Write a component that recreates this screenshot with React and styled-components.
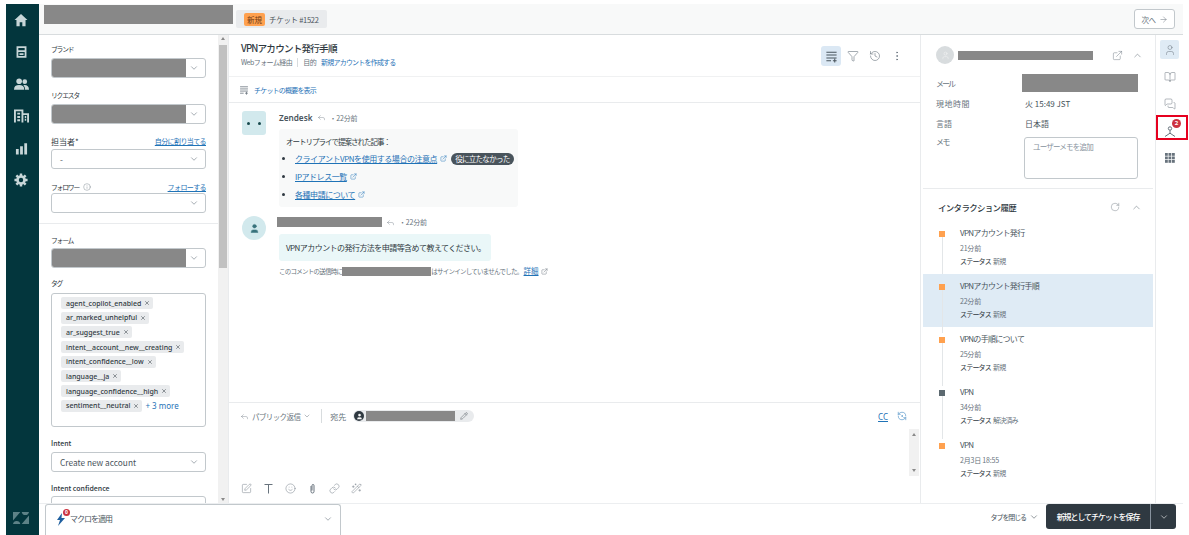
import React from 'react';
import styled, { createGlobalStyle } from 'styled-components';
import {
  ChevronDown, ChevronUp, ExternalLink, Filter, History, MoreVertical, Reply, RotateCw, RefreshCcwDot,
  User, BookOpen, MessagesSquare, Smile, Link, WandSparkles, SquarePen, Pencil,
  ArrowRight, Info, X,
} from 'lucide-react';

const Global = createGlobalStyle`
  html, body { margin: 0; padding: 0; background: #fff; }
  body { font-family: "Noto Sans CJK JP", "Noto Sans", sans-serif; color: #2f3941; overflow: hidden; }
  * { box-sizing: border-box; }
`;

const Page = styled.div`
  width: 1189px;
  height: 535px;
  padding: 4px 6px 0;
  display: flex;
  position: relative;
  overflow: hidden;
  white-space: nowrap;
`;

const Nav = styled.nav`
  width: 33px;
  flex: none;
  background: #03363d;
  display: flex;
  flex-direction: column;
  align-items: center;
  padding: 9px 3px 0 0;
  gap: 18px;
  color: #c8d6d8;
  & > svg { display: block; }
  & > svg:last-child { margin-top: auto; margin-bottom: 11px; color: #5d8287; }
`;

const Main = styled.div`
  flex: 1;
  min-width: 0;
  display: flex;
  flex-direction: column;
`;

const Header = styled.header`
  height: 31px;
  flex: none;
  background: #f8f9f9;
  border-bottom: 1px solid #d8dcde;
  display: flex;
  align-items: center;
  padding-left: 5px;
  padding-right: 8px;
`;

const Redact = styled.div`
  width: ${(p) => p.w}px;
  height: ${(p) => p.h}px;
  background: #888;
  flex: none;
`;

const TabRedact = styled(Redact)`
  align-self: flex-start;
  margin-top: 1px;
`;

const TicketTab = styled.div`
  margin-left: 3px;
  height: 18px;
  width: 91px;
  background: #e9ebed;
  border-radius: 2px;
  display: flex;
  align-items: center;
  padding-left: 8px;
  gap: 4px;
  font-size: 7.5px;
  letter-spacing: -0.3px;
  color: #49545c;
`;

const NewBadge = styled.span`
  background: #ffa14f;
  color: #703b15;
  border-radius: 2px;
  font-size: 7.5px;
  letter-spacing: 0;
  line-height: 13px;
  height: 13px;
  width: 21px;
  text-align: center;
`;

const NextButton = styled.button`
  margin-left: auto;
  width: 41px;
  height: 20px;
  border: 1px solid #c2c8cc;
  border-radius: 3px;
  background: #fff;
  color: #68737d;
  font: inherit;
  font-size: 7.5px;
  letter-spacing: -0.5px;
  display: flex;
  align-items: center;
  justify-content: center;
  gap: 3px;
  padding: 0;
`;

const Body = styled.div`
  flex: 1;
  min-height: 0;
  display: flex;
`;

const Sidebar = styled.aside`
  width: 190px;
  flex: none;
  display: flex;
  border-right: 1px solid #e9ebed;
  overflow: hidden;
`;

const SideContent = styled.div`
  flex: 1;
  min-width: 0;
  overflow: hidden;
`;

const SideSection = styled.div`
  padding: ${(p) => p.pad};
  border-bottom: ${(p) => (p.divider ? '1px solid #e9ebed' : 'none')};
`;

const Field = styled.div`
  margin-bottom: ${(p) => p.mb ?? 10}px;
`;

const LabelRow = styled.div`
  display: flex;
  align-items: center;
  justify-content: space-between;
  height: 16px;
  font-size: ${(p) => (p.kanji ? 8 : p.bold ? 7 : 6.8)}px;
  letter-spacing: ${(p) => (p.kanji || p.bold ? 0 : -1.2)}px;
  color: #2f3941;
  font-weight: ${(p) => (p.bold ? 500 : 400)};
  margin-bottom: ${(p) => p.mb ?? 1}px;
`;

const LabelText = styled.span`
  display: flex;
  align-items: center;
  gap: 4px;
`;

const SideLink = styled.a`
  color: #1f73b7;
  text-decoration: underline;
  font-size: 7px;
  letter-spacing: -0.6px;
`;

const Select = styled.div`
  height: 20px;
  border: 1px solid #c2c8cc;
  border-radius: 3px;
  display: flex;
  align-items: center;
  font-size: 8.3px;
  color: #49545c;
  padding-left: ${(p) => (p.flush ? 0 : 8)}px;
  padding-right: 6px;
  background: #fff;
  overflow: hidden;
  & > svg { margin-left: auto; color: #68737d; }
`;

const TagBox = styled.div`
  height: 134px;
  border: 1px solid #c2c8cc;
  border-radius: 3px;
  padding: 3px 9px;
  display: flex;
  flex-direction: column;
  align-items: flex-start;
  gap: 2.7px;
`;

const TagLine = styled.div`
  display: flex;
  align-items: center;
  gap: 3px;
`;

const Tag = styled.span`
  height: 12px;
  background: #e9ebed;
  border-radius: 2px;
  font-family: "Noto Sans", sans-serif;
  font-size: 7px;
  font-weight: 500;
  color: #2f3941;
  display: flex;
  align-items: center;
  gap: 3px;
  padding: 0 3px 0 5px;
`;

const More = styled.span`
  font-family: "Noto Sans", sans-serif;
  font-size: 8px;
  color: #1f73b7;
`;

const Scrollbar = styled.div`
  width: 10px;
  flex: none;
  background: #f1f1f1;
  display: flex;
  flex-direction: column;
  align-items: center;
  justify-content: space-between;
  padding-top: 2px;
  padding-bottom: 2px;
`;

const ScrollThumb = styled.div`
  width: 8px;
  height: 223px;
  margin-top: 5px;
  margin-bottom: auto;
  background: #c1c1c1;
`;

const Arrow = styled.span`
  width: 0;
  height: 0;
  border-left: 2.5px solid transparent;
  border-right: 2.5px solid transparent;
  border-${(p) => (p.down ? 'top' : 'bottom')}: 3px solid #8a8a8a;
`;

const Center = styled.main`
  flex: 1;
  min-width: 0;
  display: flex;
  flex-direction: column;
  border-right: 1px solid #e9ebed;
`;

const TitleBar = styled.div`
  height: 42px;
  flex: none;
  border-bottom: 1px solid #f0f1f2;
  padding: 6px 13px 0 12px;
  display: flex;
  justify-content: space-between;
`;

const Title = styled.h1`
  margin: 0;
  font-size: 9.6px;
  letter-spacing: -0.8px;
  line-height: 15px;
  font-weight: 500;
  color: #2f3941;
`;

const SubLine = styled.div`
  display: flex;
  align-items: center;
  gap: 5px;
  font-size: 7px;
  letter-spacing: -0.55px;
  line-height: 12px;
  color: #68737d;
`;

const Sep = styled.span`
  width: 1px;
  height: 9px;
  background: #d8dcde;
`;

const BlueText = styled.span`
  color: #1f73b7;
  letter-spacing: -0.8px;
`;

const ToolIcons = styled.div`
  display: flex;
  align-items: center;
  gap: 2px;
  height: 20px;
  margin-top: 5px;
  color: #68737d;
`;

const ToolIcon = styled.span`
  width: 20px;
  height: 20px;
  border-radius: 3px;
  display: flex;
  align-items: center;
  justify-content: center;
  background: ${(p) => (p.active ? '#dbe8f4' : 'transparent')};
  color: ${(p) => (p.active ? '#49545c' : '#68737d')};
`;

const SummaryRow = styled.div`
  height: 26px;
  flex: none;
  border-bottom: 1px solid #e9ebed;
  display: flex;
  align-items: center;
  gap: 5px;
  padding-left: 10px;
  color: #68737d;
  font-size: 7px;
`;

const Conversation = styled.div`
  flex: 1;
  min-height: 0;
  padding: 8px 0 0 13px;
  display: flex;
  flex-direction: column;
  gap: 9px;
`;

const Msg = styled.div`
  display: flex;
  gap: ${(p) => p.gap}px;
`;

const Avatar = styled.div`
  width: 24px;
  height: 24px;
  flex: none;
  background: #d2e9ed;
  border-radius: ${(p) => (p.round ? '50%' : '3px')};
  display: flex;
  align-items: center;
  justify-content: center;
  gap: 8px;
  color: #38727c;
`;

const Eye = styled.i`
  width: 3px;
  height: 3px;
  border-radius: 50%;
  background: #17494d;
`;

const MsgBody = styled.div`
  display: flex;
  flex-direction: column;
  align-items: flex-start;
`;

const MsgHead = styled.div`
  display: flex;
  align-items: center;
  gap: 4px;
  height: ${(p) => p.h}px;
  font-size: 7px;
  letter-spacing: -0.2px;
  color: #68737d;
`;

const Author = styled.b`
  font-family: "Noto Sans", sans-serif;
  font-size: 8.2px;
  letter-spacing: 0;
  font-weight: 600;
  color: #49545c;
`;

const ArticleBox = styled.div`
  width: 239px;
  height: 78px;
  margin-top: 5px;
  background: #f8f9f9;
  border-radius: 3px;
  padding: 6px 7px;
  font-size: 8px;
  line-height: 13px;
`;

const ArticleIntro = styled.div`
  font-size: 7.5px;
  letter-spacing: -1px;
`;

const ArticleList = styled.ul`
  list-style: disc;
  margin: 4px 0 0;
  padding: 0 0 0 9px;
  display: flex;
  flex-direction: column;
  gap: 5px;
`;

const ArticleItem = styled.li`
  padding: 0;
`;

const ArticleRow = styled.span`
  display: inline-flex;
  align-items: center;
  gap: 3px;
  color: #1f73b7;
  & a { color: #1f73b7; text-decoration: underline; letter-spacing: -0.45px; }
`;

const Pill = styled.span`
  background: #49545c;
  color: #fff;
  font-size: 7.5px;
  letter-spacing: -0.7px;
  line-height: 12px;
  padding: 0 4px;
  border-radius: 6px;
  margin-left: 1px;
`;

const Bubble = styled.div`
  width: 212px;
  height: 27px;
  margin-top: 6px;
  margin-left: 2px;
  background: #eaf7f8;
  border-radius: 3px;
  font-size: 8px;
  letter-spacing: -0.55px;
  line-height: 27px;
  padding-left: 7px;
  color: #2f3941;
`;

const Note = styled.div`
  margin-top: 5px;
  margin-left: 2px;
  display: flex;
  align-items: center;
  font-size: 6.5px;
  letter-spacing: -0.75px;
  line-height: 10px;
  color: #68737d;
`;

const NoteLink = styled.u`
  color: #1f73b7;
  font-size: 7.5px;
  letter-spacing: 0;
  margin: 0 2px 0 1px;
`;

const Composer = styled.section`
  height: 101px;
  flex: none;
  border-top: 1px solid #e9ebed;
  display: flex;
  flex-direction: column;
`;

const ComposerTop = styled.div`
  height: 26px;
  flex: none;
  display: flex;
  align-items: center;
  padding: 0 13px 0 11px;
  color: #68737d;
  gap: 3px;
`;

const ReplyLabel = styled.span`
  font-size: 7.5px;
  letter-spacing: -0.6px;
`;

const ToLabel = styled.span`
  font-size: 8px;
`;

const ReplySep = styled(Sep)`
  height: 14px;
  margin: 0 5px 0 7px;
`;

const Recipient = styled.span`
  height: 12px;
  margin-left: 4px;
  background: #e9ebed;
  border-radius: 6px;
  display: flex;
  align-items: center;
  padding: 0 6px 0 1px;
  gap: 1px;
  color: #2f3941;
`;

const RecipientDot = styled.span`
  width: 10px;
  height: 10px;
  background: #2f3941;
  border-radius: 50%;
  margin-right: 1px;
  color: #fff;
  display: flex;
  align-items: center;
  justify-content: center;
`;

const RedactSmall = styled(Redact)`
  margin-right: 4px;
`;

const CcRow = styled.span`
  margin-left: auto;
  display: flex;
  align-items: center;
  gap: 9px;
  color: #1f73b7;
  & u { font-family: "Noto Sans", sans-serif; font-size: 8px; }
`;

const ComposerMid = styled.div`
  flex: 1;
  display: flex;
  justify-content: flex-end;
  padding-right: 1px;
`;

const ComposerScroll = styled(Scrollbar)`
  height: 47px;
  padding-top: 4px;
  padding-bottom: 4px;
`;

const ComposerTools = styled.div`
  height: 27px;
  flex: none;
  display: flex;
  align-items: center;
  gap: 11px;
  padding-left: 12px;
  padding-bottom: 3px;
  color: #68737d;
`;

const Details = styled.aside`
  width: 235px;
  flex: none;
  display: flex;
  flex-direction: column;
  border-right: 1px solid #e9ebed;
  padding: 0 2px;
`;

const UserHead = styled.div`
  height: 38px;
  flex: none;
  display: flex;
  align-items: center;
  padding: 2px 10px 0 13px;
  gap: 4px;
  color: #68737d;
`;

const UserCircle = styled.span`
  width: 18px;
  height: 18px;
  background: #d8dcde;
  border-radius: 50%;
  display: flex;
  align-items: center;
  justify-content: center;
  color: #f8f9f9;
`;

const HeadIcons = styled.span`
  margin-left: auto;
  display: flex;
  align-items: center;
  gap: 9px;
`;

const InfoGrid = styled.div`
  display: grid;
  grid-template-columns: 86px 1fr;
  grid-template-rows: 20px 20px 20px 55px;
  padding: 0 15px 0 13px;
  font-size: 8px;
  align-items: center;
  color: #68737d;
`;

const InfoLabel = styled.div`
  letter-spacing: ${(p) => p.ls || 0}px;
`;

const InfoValue = styled.div`
  color: #49545c;
  padding-left: 3px;
`;

const MemoLabel = styled.div`
  align-self: start;
  margin-top: 3px;
  letter-spacing: -1.5px;
`;

const MemoBox = styled.div`
  align-self: start;
  height: 42px;
  margin-top: 4px;
  margin-left: 2px;
  border: 1px solid #c2c8cc;
  border-radius: 3px;
  padding: 3px 8px;
  font-size: 7.5px;
  letter-spacing: -0.8px;
  color: #87929d;
`;

const HistoryHead = styled.div`
  height: 33px;
  flex: none;
  border-top: 1px solid #e9ebed;
  display: flex;
  align-items: center;
  padding: 4px 11px 0 15px;
  font-size: 8.5px;
  letter-spacing: -0.7px;
  font-weight: 500;
  color: #2f3941;
  & > span { margin-left: auto; display: flex; gap: 11px; color: #68737d; align-items: center; }
`;

const Timeline = styled.div`
  display: flex;
  flex-direction: column;
`;

const Item = styled.div`
  height: 53px;
  display: flex;
  padding: 5px 0 0 16px;
  position: relative;
  background: ${(p) => (p.selected ? '#dfebf5' : 'transparent')};
  &::before {
    content: '';
    position: absolute;
    left: 18.5px;
    top: 12px;
    bottom: -6px;
    width: 1px;
    background: #e3e6e8;
    display: ${(p) => (p.last ? 'none' : 'block')};
    z-index: 0;
  }
`;

const Dot = styled.span`
  position: relative;
  z-index: 1;
  width: 6px;
  height: 6px;
  margin-top: 5px;
  flex: none;
  background: ${(p) => p.color};
`;

const ItemText = styled.div`
  margin-left: 15px;
  display: flex;
  flex-direction: column;
`;

const ItemTitle = styled.div`
  font-size: 8px;
  letter-spacing: -0.7px;
  line-height: 14px;
  color: #49545c;
`;

const ItemTime = styled.div`
  font-size: 7px;
  letter-spacing: -0.2px;
  line-height: 13px;
  margin-top: 2px;
  color: #68737d;
`;

const ItemStatus = styled.div`
  font-size: 7px;
  letter-spacing: -0.8px;
  line-height: 13px;
  color: #2f3941;
  & > span { color: #68737d; margin-left: 2px; }
`;

const Rail = styled.div`
  width: 27px;
  flex: none;
  display: flex;
  flex-direction: column;
  align-items: center;
  padding-top: 5px;
  gap: 8px;
`;

const RailIcon = styled.span`
  width: 19px;
  height: 19px;
  border-radius: 2px;
  display: flex;
  align-items: center;
  justify-content: center;
  background: ${(p) => (p.active ? '#dfebf5' : 'transparent')};
  color: #68737d;
  position: relative;
`;

const RedBadge = styled.span`
  position: absolute;
  top: -2px;
  right: -2px;
  width: 9px;
  height: 9px;
  border-radius: 50%;
  background: #cc3340;
  color: #fff;
  font-family: "Noto Sans", sans-serif;
  font-size: 6px;
  font-weight: 700;
  line-height: 9px;
  text-align: center;
`;

const Highlight = styled.div`
  position: absolute;
  left: 1156px;
  top: 115px;
  width: 32px;
  height: 25px;
  border: 2px solid #e6001f;
`;

const Footer = styled.footer`
  height: 32px;
  flex: none;
  border-top: 1px solid #eceef0;
  display: flex;
  align-items: flex-start;
  padding-left: 6px;
  padding-right: 7px;
`;

const MacroBox = styled.div`
  width: 296px;
  height: 31px;
  border: 1px solid #c2c8cc;
  border-bottom: none;
  border-radius: 3px 3px 0 0;
  display: flex;
  align-items: center;
  padding: 0 7px 3px 9px;
  font-size: 8px;
  letter-spacing: -1px;
  color: #49545c;
  & > svg:last-child { margin-left: auto; color: #68737d; }
`;

const MacroIcon = styled.span`
  position: relative;
  width: 14px;
  height: 14px;
  margin-right: 1px;
  color: #1f5f9f;
`;

const MacroCount = styled.span`
  position: absolute;
  top: -3px;
  right: -1px;
  width: 7px;
  height: 7px;
  border-radius: 50%;
  background: #cc3340;
  color: #fff;
  font-family: "Noto Sans", sans-serif;
  font-size: 5px;
  font-weight: 700;
  letter-spacing: 0;
  line-height: 7px;
  text-align: center;
`;

const CloseTab = styled.div`
  margin-left: auto;
  height: 25px;
  display: flex;
  align-items: center;
  gap: 3px;
  font-size: 7px;
  letter-spacing: -1.1px;
  color: #49545c;
`;

const SaveGroup = styled.div`
  margin-left: 7px;
  height: 25px;
  width: 130px;
  background: #2f3941;
  border-radius: 3px;
  color: #fff;
  display: flex;
  align-items: center;
  font-size: 8px;
  letter-spacing: -1.1px;
  font-weight: 500;
`;

const SaveLabel = styled.span`
  flex: 1;
  text-align: center;
  line-height: 25px;
  border-right: 1px solid #87929d;
`;

const SaveCaret = styled.span`
  width: 25px;
  display: flex;
  justify-content: center;
`;

const HomeIcon = () => (
  <svg width="14" height="14" viewBox="0 0 16 16" fill="currentColor"><path d="M8 1 0.6 8h2.2v7h3.7v-4.5h3V15h3.7V8h2.2z" /></svg>
);
const ViewsIcon = () => (
  <svg width="13" height="14" viewBox="0 0 16 16" fill="none" stroke="currentColor" strokeWidth="2.2"><path d="M3 2h10v5H3zM3 7h10v7H3zM5.5 10.5h5" /></svg>
);
const PeopleIcon = () => (
  <svg width="15" height="14" viewBox="0 0 16 14" fill="currentColor"><circle cx="5.5" cy="4" r="3" /><circle cx="11.5" cy="4.5" r="2.5" /><path d="M0 13c0-3.5 2-5 5.5-5s5.5 1.5 5.5 5zM11.8 13c0-2-.5-3.5-1.8-4.7 3.5-.6 6 1 6 4.700z" /></svg>
);
const OrgIcon = () => (
  <svg width="15" height="14" viewBox="0 0 16 14" fill="none" stroke="currentColor" strokeWidth="2"><path d="M1 14V1h8v13M9 5h6v9M3.5 4.5h3M3.5 8h3M3.5 11.5h3M11.5 8h1.5M11.5 11h1.5" /></svg>
);
const ChartIcon = () => (
  <svg width="13" height="14" viewBox="0 0 14 14" fill="currentColor"><path d="M1 8h3v6H1zM5.5 5h3v9h-3zM10 2h3v12h-3z" /></svg>
);
const GearIcon = () => (
  <svg width="14" height="14" viewBox="0 0 16 16" fill="none" stroke="currentColor"><circle cx="8" cy="8" r="4" strokeWidth="3" /><path strokeWidth="2.8" d="M8 .5v3M8 12.5v3M.5 8h3M12.5 8h3M2.7 2.7l2 2M11.3 11.3l2 2M13.3 2.7l-2 2M4.7 11.3l-2 2" /></svg>
);
const ZendeskLogo = () => (
  <svg width="16" height="12" viewBox="0 0 16 12" fill="currentColor"><path d="M0 0h7.3L0 8.5zM16 12H8.7L16 3.5zM7.3 12H0a3.7 3.7 0 0 1 7.3 0zM8.7 0H16a3.7 3.7 0 0 1-7.3 0z" /></svg>
);
const BoltIcon = () => (
  <svg width="14" height="14" viewBox="0 0 14 14" fill="currentColor"><path d="M7 1 2 8h3l-2 6 7-8H6.5z" /></svg>
);
const SplitIcon = () => (
  <svg width="14" height="14" viewBox="0 0 14 14" fill="none" stroke="currentColor" strokeWidth="1"><circle cx="7" cy="4.5" r="1.7" /><path d="M7 6.2v3M7 9.2l-5 3.3M7 9.200l5 3.3" /></svg>
);
const TextIcon = () => (
  <svg width="11" height="11" viewBox="0 0 11 11" fill="none" stroke="currentColor" strokeWidth="1"><path d="M1.5 1.500h8M5.500 1.500v9" /></svg>
);
const ClipIcon = () => (
  <svg width="11" height="11" viewBox="0 0 11 11" fill="none" stroke="currentColor" strokeWidth="1"><path d="M4 3v5.5a1.5 1.5 0 0 0 3 0V2.5a1 1 0 0 0-2 0v5" /></svg>
);
const AppsIcon = () => (
  <svg width="10" height="10" viewBox="0 0 10 10" fill="currentColor">
    {[0, 3.5, 7].flatMap((y) => [0, 3.5, 7].map((x) => <rect key={`${x}-${y}`} x={x} y={y} width="2.8" height="2.8" />))}
  </svg>
);
const ConversationListIcon = ({ size }) => (
  <svg width={size} height={size} viewBox="0 0 14 14" fill="none" stroke="currentColor" strokeWidth="1.1"><path d="M1.5 2.500h11M1.500 5.500h11M1.500 8.500h11M1.500 11.500h5M10.500 9.500v4M8.500 11.500h4" /></svg>
);
const Chev = (props) => <ChevronDown size={10} strokeWidth={1.4} {...props} />;
const Ext = () => <ExternalLink size={7} strokeWidth={1.6} />;

const selects = [
  { label: 'ブランド' },
  { label: 'リクエスタ' },
];

const tags = [
  'agent_copilot_enabled',
  'ar_marked_unhelpful',
  'ar_suggest_true',
  'intent__account__new__creating',
  'intent_confidence__low',
  'language__ja',
  'language_confidence__high',
];

const history = [
  { title: 'VPNアカウント発行', time: '21分前', status: '新規', color: '#ffa14f' },
  { title: 'VPNアカウント発行手順', time: '22分前', status: '新規', color: '#ffa14f', selected: true },
  { title: 'VPNの手順について', time: '25分前', status: '新規', color: '#ffa14f' },
  { title: 'VPN', time: '34分前', status: '解決済み', color: '#5c6970' },
  { title: 'VPN', time: '2月3日 18:55', status: '新規', color: '#ffa14f', last: true },
];

const TagChip = ({ name }) => (
  <Tag>{name}<X size={6} strokeWidth={2} /></Tag>
);

const App = () => (
  <Page>
    <Global />
    <Nav>
      <HomeIcon />
      <ViewsIcon />
      <PeopleIcon />
      <OrgIcon />
      <ChartIcon />
      <GearIcon />
      <ZendeskLogo />
    </Nav>
    <Main>
      <Header>
        <TabRedact w={189} h={19} />
        <TicketTab><NewBadge>新規</NewBadge>チケット #1522</TicketTab>
        <NextButton>次へ <ArrowRight size={9} strokeWidth={1.3} /></NextButton>
      </Header>
      <Body>
        <Sidebar>
          <SideContent>
            <SideSection divider pad="6px 12px 0">
              {selects.map((s) => (
                <Field key={s.label} mb={9}>
                  <LabelRow>{s.label}</LabelRow>
                  <Select flush><Redact w={134} h={18} /><Chev /></Select>
                </Field>
              ))}
              <Field mb={10}>
                <LabelRow kanji mb={0}>担当者*<SideLink>自分に割り当てる</SideLink></LabelRow>
                <Select>-<Chev /></Select>
              </Field>
              <Field>
                <LabelRow mb={-2}>
                  <LabelText>フォロワー <Info size={8} strokeWidth={1.2} color="#68737d" /></LabelText>
                  <SideLink>フォローする</SideLink>
                </LabelRow>
                <Select><Chev /></Select>
              </Field>
            </SideSection>
            <SideSection pad="8px 12px 0">
              <Field mb={7}>
                <LabelRow mb={0}>フォーム</LabelRow>
                <Select flush><Redact w={134} h={18} /><Chev /></Select>
              </Field>
              <Field mb={8}>
                <LabelRow mb={2}>タグ</LabelRow>
                <TagBox>
                  {tags.map((t) => <TagChip key={t} name={t} />)}
                  <TagLine><TagChip name="sentiment__neutral" /><More>+ 3 more</More></TagLine>
                </TagBox>
              </Field>
              <Field mb={8}>
                <LabelRow bold mb={1}>Intent</LabelRow>
                <Select>Create new account<Chev /></Select>
              </Field>
              <Field mb={0}>
                <LabelRow bold mb={0}>Intent confidence</LabelRow>
                <Select />
              </Field>
            </SideSection>
          </SideContent>
          <Scrollbar>
            <Arrow />
            <ScrollThumb />
            <Arrow down />
          </Scrollbar>
        </Sidebar>
        <Center>
          <TitleBar>
            <div>
              <Title>VPNアカウント発行手順</Title>
              <SubLine>Webフォーム経由<Sep />目的<BlueText>新規アカウントを作成する</BlueText></SubLine>
            </div>
            <ToolIcons>
              <ToolIcon active><ConversationListIcon size={13} /></ToolIcon>
              <ToolIcon><Filter size={12} strokeWidth={1.2} /></ToolIcon>
              <ToolIcon><History size={12} strokeWidth={1.2} /></ToolIcon>
              <ToolIcon><MoreVertical size={12} strokeWidth={1.5} /></ToolIcon>
            </ToolIcons>
          </TitleBar>
          <SummaryRow>
            <ConversationListIcon size={10} />
            <BlueText>チケットの概要を表示</BlueText>
          </SummaryRow>
          <Conversation>
            <Msg gap={13}>
              <Avatar><Eye /><Eye /></Avatar>
              <MsgBody>
                <MsgHead h={13}>
                  <Author>Zendesk</Author>
                  <Reply size={9} strokeWidth={1} />・22分前
                </MsgHead>
                <ArticleBox>
                  <ArticleIntro>オートリプライで提案された記事：</ArticleIntro>
                  <ArticleList>
                    <ArticleItem>
                      <ArticleRow><a>クライアントVPNを使用する場合の注意点</a><Ext /><Pill>役に立たなかった</Pill></ArticleRow>
                    </ArticleItem>
                    <ArticleItem>
                      <ArticleRow><a>IPアドレス一覧</a><Ext /></ArticleRow>
                    </ArticleItem>
                    <ArticleItem>
                      <ArticleRow><a>各種申請について</a><Ext /></ArticleRow>
                    </ArticleItem>
                  </ArticleList>
                </ArticleBox>
              </MsgBody>
            </Msg>
            <Msg gap={11}>
              <Avatar round><User size={11} fill="currentColor" strokeWidth={1} /></Avatar>
              <MsgBody>
                <MsgHead h={12}>
                  <Redact w={105} h={10} />
                  <Reply size={9} strokeWidth={1} />・22分前
                </MsgHead>
                <Bubble>VPNアカウントの発行方法を申請等含めて教えてください。</Bubble>
                <Note>
                  このコメントの送信時に<Redact w={89} h={9} />はサインインしていませんでした。<NoteLink>詳細</NoteLink><Ext />
                </Note>
              </MsgBody>
            </Msg>
          </Conversation>
          <Composer>
            <ComposerTop>
              <Reply size={9} strokeWidth={1} />
              <ReplyLabel>パブリック返信</ReplyLabel>
              <Chev size={8} />
              <ReplySep />
              <ToLabel>宛先</ToLabel>
              <Recipient>
                <RecipientDot><User size={7} fill="currentColor" strokeWidth={1} /></RecipientDot>
                <RedactSmall w={89} h={10} />
                <Pencil size={8} strokeWidth={1.2} />
              </Recipient>
              <CcRow><u>CC</u><RefreshCcwDot size={10} strokeWidth={1.2} /></CcRow>
            </ComposerTop>
            <ComposerMid>
              <ComposerScroll><Arrow /><Arrow down /></ComposerScroll>
            </ComposerMid>
            <ComposerTools>
              <SquarePen size={11} strokeWidth={1} />
              <TextIcon />
              <Smile size={11} strokeWidth={1} />
              <ClipIcon />
              <Link size={11} strokeWidth={1} />
              <WandSparkles size={11} strokeWidth={1} />
            </ComposerTools>
          </Composer>
        </Center>
        <Details>
          <UserHead>
            <UserCircle><User size={9} strokeWidth={1.2} /></UserCircle>
            <Redact w={135} h={9} />
            <HeadIcons>
              <ExternalLink size={11} strokeWidth={1} />
              <ChevronUp size={11} strokeWidth={1.2} />
            </HeadIcons>
          </UserHead>
          <InfoGrid>
            <InfoLabel ls={-2}>メール</InfoLabel>
            <Redact w={116} h={18} />
            <InfoLabel ls={0.5}>現地時間</InfoLabel>
            <InfoValue>火 15:49 JST</InfoValue>
            <InfoLabel>言語</InfoLabel>
            <InfoValue>日本語</InfoValue>
            <MemoLabel>メモ</MemoLabel>
            <MemoBox>ユーザーメモを追加</MemoBox>
          </InfoGrid>
          <HistoryHead>
            インタラクション履歴
            <span><RotateCw size={10} strokeWidth={1} /><ChevronUp size={11} strokeWidth={1.2} /></span>
          </HistoryHead>
          <Timeline>
            {history.map((h) => (
              <Item key={h.title + h.time} selected={h.selected} last={h.last}>
                <Dot color={h.color} />
                <ItemText>
                  <ItemTitle>{h.title}</ItemTitle>
                  <ItemTime>{h.time}</ItemTime>
                  <ItemStatus>ステータス<span>{h.status}</span></ItemStatus>
                </ItemText>
              </Item>
            ))}
          </Timeline>
        </Details>
        <Rail>
          <RailIcon active><User size={12} strokeWidth={1} /></RailIcon>
          <RailIcon><BookOpen size={12} strokeWidth={1} /></RailIcon>
          <RailIcon><MessagesSquare size={12} strokeWidth={1} /></RailIcon>
          <RailIcon><SplitIcon /><RedBadge>2</RedBadge></RailIcon>
          <RailIcon><AppsIcon /></RailIcon>
        </Rail>
      </Body>
      <Footer>
        <MacroBox>
          <MacroIcon><BoltIcon /><MacroCount>0</MacroCount></MacroIcon>
          マクロを適用
          <Chev />
        </MacroBox>
        <CloseTab>タブを閉じる <Chev /></CloseTab>
        <SaveGroup>
          <SaveLabel>新規としてチケットを保存</SaveLabel>
          <SaveCaret><Chev color="#fff" /></SaveCaret>
        </SaveGroup>
      </Footer>
    </Main>
    <Highlight />
  </Page>
);

export default App;
